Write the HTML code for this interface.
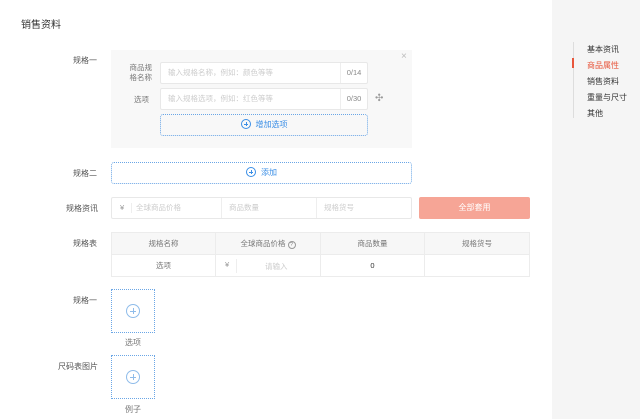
<!DOCTYPE html>
<html><head><meta charset="utf-8"><style>
*{margin:0;padding:0;box-sizing:border-box}
body{width:640px;height:419px;background:#fff;font-family:"Liberation Sans","Noto Sans CJK SC",sans-serif;font-size:8px;color:#555;position:relative;overflow:hidden}
.a{position:absolute}
.lbl{position:absolute;width:60px;text-align:right;font-size:8px;color:#555}
.inp{position:absolute;background:#fff;border:1px solid #e8e8e8;border-radius:2px;color:#ccc;font-size:7.5px;line-height:20px;padding-left:7px}
.dash{position:absolute;border:1px dotted #6aa6e6;border-radius:3px;color:#3a8ee6;font-size:8px;text-align:center}
.pc{display:inline-block;width:10px;height:10px;border:1px solid #3a8ee6;border-radius:50%;vertical-align:-2px;margin-right:5px;position:relative}
.pc:before{content:"";position:absolute;left:2px;top:4px;width:4px;height:1px;background:#3a8ee6}
.pc:after{content:"";position:absolute;left:4px;top:2px;width:1px;height:4px;background:#3a8ee6}
.up{position:absolute;width:44px;height:44px;border:1px dotted #6aa6e6}
.up .c{position:absolute;left:14px;top:14px;width:14px;height:14px;border:1px solid #8fbcea;border-radius:50%}
.up .c:before{content:"";position:absolute;left:3px;top:6px;width:6px;height:1px;background:#8fbcea}
.up .c:after{content:"";position:absolute;left:6px;top:3px;width:1px;height:6px;background:#8fbcea}
table{border-collapse:collapse}
td{border:1px solid #ececec;text-align:center;font-size:7.5px;color:#777;height:22px}
</style></head><body>
<div class="a" style="left:21px;top:16px;font-size:10px;color:#333">销售资料</div>

<div class="lbl" style="left:37px;top:55px">规格一</div>
<div class="a" style="left:111px;top:50px;width:301px;height:98px;background:#f8f8f8"></div>
<div class="a" style="left:401px;top:51px;color:#bbb;font-size:10px">×</div>
<div class="a" style="left:124px;top:63px;text-align:right;width:28px;color:#777;font-size:7.5px;line-height:10px">商品规<br>格名称</div>
<div class="inp" style="left:160px;top:62px;width:208px;height:22px">输入规格名称，例如：颜色等等<span class="a" style="right:0;top:0;width:27px;border-left:1px solid #eee;color:#888;text-align:center">0/14</span></div>
<div class="a" style="left:134px;top:94px;color:#777;font-size:7.5px">选项</div>
<div class="inp" style="left:160px;top:88px;width:208px;height:22px">输入规格选项，例如：红色等等<span class="a" style="right:0;top:0;width:27px;border-left:1px solid #eee;color:#888;text-align:center">0/30</span></div>
<div class="a" style="left:375px;top:93px;color:#999;font-size:10px">✣</div>
<div class="dash" style="left:160px;top:114px;width:208px;height:22px;line-height:20px"><span class="pc"></span>增加选项</div>

<div class="lbl" style="left:37px;top:168px">规格二</div>
<div class="dash" style="left:111px;top:162px;width:301px;height:22px;line-height:20px"><span class="pc"></span>添加</div>

<div class="lbl" style="left:38px;top:203px">规格资讯</div>
<div class="inp" style="left:111px;top:197px;width:301px;height:22px;padding:0">
<span class="a" style="left:8px;color:#999">¥</span><span class="a" style="left:19px;top:5px;height:10px;border-left:1px solid #eee"></span>
<span class="a" style="left:24px">全球商品价格</span>
<span class="a" style="left:109px;top:0;height:20px;border-left:1px solid #eee"></span>
<span class="a" style="left:117px">商品数量</span>
<span class="a" style="left:204px;top:0;height:20px;border-left:1px solid #eee"></span>
<span class="a" style="left:212px">规格货号</span></div>
<div class="a" style="left:419px;top:197px;width:111px;height:22px;background:#f6a596;border-radius:2px;color:#fff;text-align:center;line-height:22px;font-size:8px">全部套用</div>

<div class="lbl" style="left:37px;top:238px">规格表</div>
<table class="a" style="left:111px;top:232px;width:419px">
<tr style="background:#f7f7f7"><td style="width:104px">规格名称</td><td style="width:105px">全球商品价格 <span style="display:inline-block;width:8px;height:8px;border:1px solid #999;border-radius:50%;font-size:5px;line-height:6px">?</span></td><td style="width:104px">商品数量</td><td>规格货号</td></tr>
<tr><td>选项</td><td style="position:relative;text-align:left"><span style="position:absolute;left:9px;top:5px;color:#999">¥</span><span style="position:absolute;left:20px;top:4px;height:14px;border-left:1px solid #eee"></span><span style="position:absolute;left:49px;top:6px;color:#ccc">请输入</span></td><td style="color:#333">0</td><td></td></tr>
</table>

<div class="lbl" style="left:37px;top:295px">规格一</div>
<div class="up" style="left:111px;top:289px"><div class="c"></div></div>
<div class="a" style="left:125px;top:337px;color:#777">选项</div>
<div class="lbl" style="left:38px;top:361px">尺码表图片</div>
<div class="up" style="left:111px;top:355px"><div class="c"></div></div>
<div class="a" style="left:125px;top:404px;color:#777">例子</div>

<div class="a" style="left:552px;top:0;width:88px;height:419px;background:#f5f5f5"></div>
<div class="a" style="left:573px;top:42px;width:1px;height:76px;background:#ddd"></div>
<div class="a" style="left:572px;top:58px;width:2px;height:10px;background:#e8563c"></div>
<div class="a" style="left:587px;top:42px;color:#333;line-height:16px;font-size:8px">基本资讯<br><span style="color:#e8563c">商品属性</span><br>销售资料<br>重量与尺寸<br>其他</div>
</body></html>
